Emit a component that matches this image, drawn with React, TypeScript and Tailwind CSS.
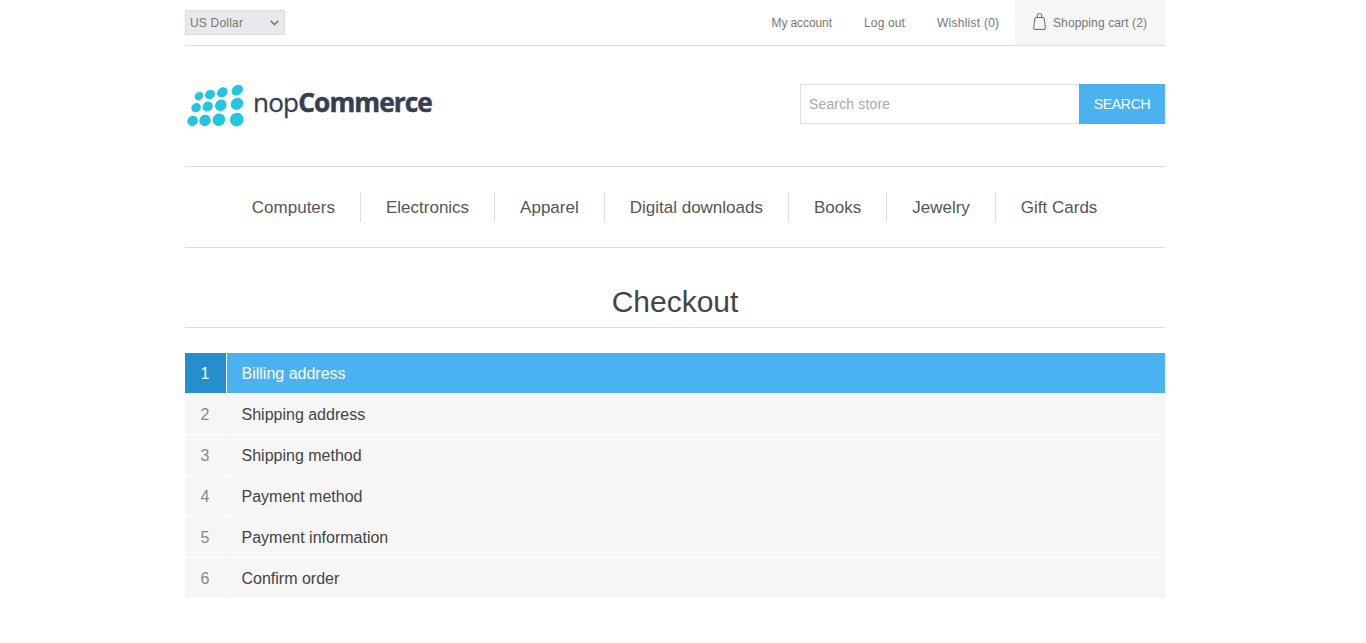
const dots = [
  [199, 96.1, 4.6, 3.9], [210, 94.5, 5.3, 4.5], [222.3, 92.3, 5.7, 4.6], [237.3, 90.1, 6.2, 4.8],
  [196.1, 107.7, 5, 4.4], [207.7, 106.5, 5.3, 4.8], [220.8, 105.3, 6, 5.5], [236.9, 103.8, 6.5, 5.8],
  [192.6, 120.9, 5.4, 4.9], [205, 120.4, 5.9, 5.5], [218.9, 119.8, 6.5, 6.1], [236.7, 119.5, 7, 6.7],
];

const categories = ["Computers", "Electronics", "Apparel", "Digital downloads", "Books", "Jewelry", "Gift Cards"];

const steps = [
  "Billing address",
  "Shipping address",
  "Shipping method",
  "Payment method",
  "Payment information",
  "Confirm order",
];

function Logo() {
  return (
    <svg className="block overflow-visible" width="270" height="60" viewBox="185 74 270 60" role="img" aria-label="nopCommerce">
      {dots.map(([x, y, rx, ry]) => (
        <ellipse key={`${x}-${y}`} cx={x} cy={y} rx={rx} ry={ry} fill="#22c6e0" transform={`rotate(-38 ${x} ${y})`} />
      ))}
      <g fill="#353f53" stroke="#353f53" fontFamily="'Open Sans', 'Noto Sans', sans-serif">
        <text x="253" y="112" fontSize="26" letterSpacing="-0.8" strokeWidth="0.3">nop</text>
        <text x="298.300" y="112" fontSize="26.3" letterSpacing="-0.95" fontWeight="700" strokeWidth="0.5">Commerce</text>
      </g>
    </svg>
  );
}

function BagIcon() {
  return (
    <svg className="mr-[6px] mb-[3px]" width="14" height="17" viewBox="0 0 14 17" fill="none" stroke="#777" strokeWidth="1.1">
      <path d="M3 4.500h7q.9 0 1.100 1l1.300 9.200q.1 1.700-1.300 1.700H1.900Q.500 16.400 .600 14.700l1.300-9.200q.2-1 1.100-1z" strokeLinejoin="round" />
      <path d="M4.300 4.300V2q0-1.300 1.300-1.300h1.800q1.300 0 1.300 1.300v2.300" />
    </svg>
  );
}

export default function App() {
  return (
    <div className="min-h-[643px] bg-white pl-[185px] font-['Liberation_Sans',Arial,sans-serif] text-[#444]">
      <div className="w-[980px]">
        <div className="flex h-[46px] justify-between border-b border-[#ddd] text-xs text-[#777]">
          <button className="mt-[10px] flex h-[25px] w-[100px] items-center justify-between border border-[#ddd] bg-[#e9e9ed] pr-[5px] pl-1 tracking-[0.2px]">
            US Dollar
            <svg width="9" height="6" viewBox="0 0 9 6" fill="none" stroke="#777" strokeWidth="1.6">
              <path d="M.7.700 4.500 4.500 8.300.700" />
            </svg>
          </button>
          <div className="flex">
            <a className="mr-8 flex w-[60.500px] items-center tracking-[-0.1px] whitespace-nowrap">My account</a>
            <a className="mr-8 flex w-[41px] items-center tracking-[0.15px] whitespace-nowrap">Log out</a>
            <a className="mr-4 flex w-[62px] items-center tracking-[0.25px] whitespace-nowrap">Wishlist (0)</a>
            <a className="flex w-[150px] items-center bg-[#f6f6f6] pl-[18px] tracking-[0.12px]">
              <BagIcon />
              Shopping cart (2)
            </a>
          </div>
        </div>

        <header className="flex h-[120px] items-center justify-between">
          <div className="mb-[4px]">
            <Logo />
          </div>
          <form className="mb-1 flex h-10 text-sm">
            <div className="flex w-[279px] items-center border border-r-0 border-[#ddd] pl-2 tracking-[0.15px] text-[#aaa]">Search store</div>
            <button type="button" className="w-[86px] bg-[#4ab2f1] tracking-[-0.3px] text-white">SEARCH</button>
          </form>
        </header>

        <nav className="flex h-[82px] items-center justify-center border-y border-[#ddd] pr-[0.8px] text-[17px] text-[#555]">
          {categories.map((name) => (
            <a key={name} className="flex h-[30px] items-center border-r border-[#ddd] px-[25px] pt-[2px] last:border-r-0">
              {name}
            </a>
          ))}
        </nav>

        <main>
          <h1 className="h-[80px] border-b border-[#ddd] pt-[35px] text-center text-[30px] leading-[37px]">Checkout</h1>
          <ol className="mt-[25px] flex flex-col gap-px">
            {steps.map((title, i) => (
              <li key={title} className="flex h-10 gap-px text-base leading-[42px]">
                <span className={i === 0 ? "w-[41px] bg-[#248ece] pr-px text-center text-white" : "w-[41px] bg-[#f6f6f6] pr-px text-center text-[#888]"}>
                  {i + 1}
                </span>
                <h2 className={i === 0 ? "flex-1 bg-[#4ab2f1] pl-[14.5px] text-white" : "flex-1 bg-[#f6f6f6] pl-[14.5px] text-[#444]"}>
                  {title}
                </h2>
              </li>
            ))}
          </ol>
        </main>
      </div>
    </div>
  );
}
